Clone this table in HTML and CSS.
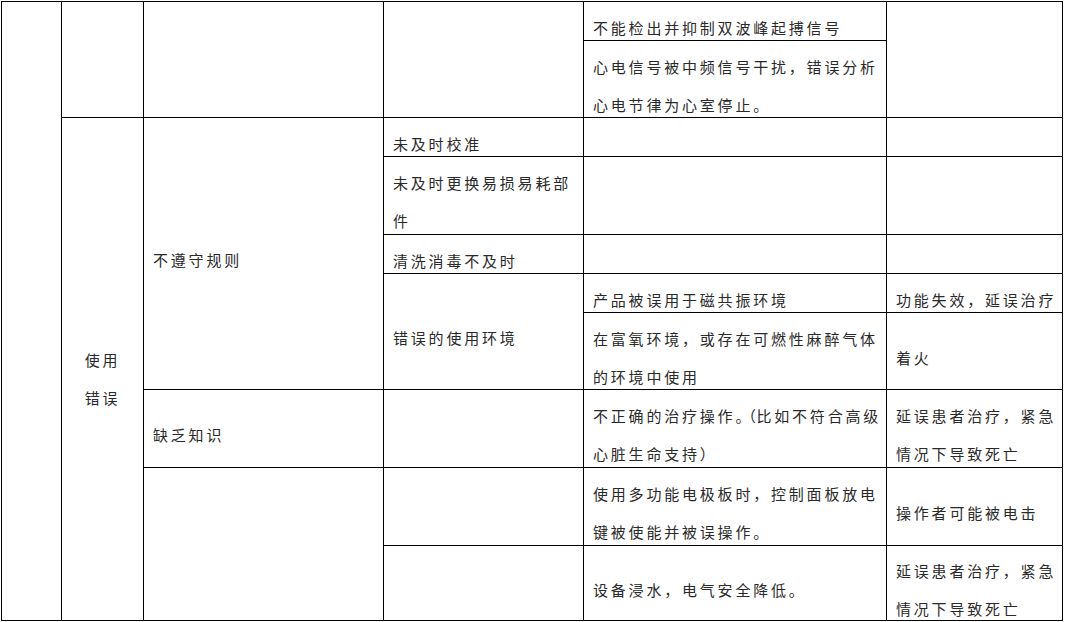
FILE: index.html
```html
<!DOCTYPE html>
<html lang="zh-CN">
<head>
<meta charset="utf-8">
<title>使用错误</title>
<link rel="stylesheet" href="styles.css">
</head>
<body>
<div class="sheet">
  <div class="cell a-c1"></div>

  <div class="cell a-c2-top"></div>
  <div class="cell a-c3-top"></div>
  <div class="cell a-c4-top"></div>
  <div class="cell a-r1c5"><p>不能检出并抑制双波峰起搏信号</p></div>
  <div class="cell a-c6-top"></div>
  <div class="cell a-r2c5"><p>心电信号被中频信号干扰，错误分析<br>心电节律为心室停止。</p></div>

  <div class="cell a-c2-main center"><p>使用<br>错误</p></div>
  <div class="cell a-c3-rules"><p>不遵守规则</p></div>
  <div class="cell a-r3c4"><p>未及时校准</p></div>
  <div class="cell a-r3c5"></div>
  <div class="cell a-r3c6"></div>

  <div class="cell a-r4c4"><p>未及时更换易损易耗部<br>件</p></div>
  <div class="cell a-r4c5"></div>
  <div class="cell a-r4c6"></div>

  <div class="cell a-r5c4"><p>清洗消毒不及时</p></div>
  <div class="cell a-r5c5"></div>
  <div class="cell a-r5c6"></div>

  <div class="cell a-env"><p>错误的使用环境</p></div>
  <div class="cell a-r6c5"><p>产品被误用于磁共振环境</p></div>
  <div class="cell a-r6c6"><p>功能失效，延误治疗</p></div>
  <div class="cell a-r7c5"><p>在富氧环境，或存在可燃性麻醉气体<br>的环境中使用</p></div>
  <div class="cell a-r7c6"><p>着火</p></div>

  <div class="cell a-r8c3"><p>缺乏知识</p></div>
  <div class="cell a-r8c4"></div>
  <div class="cell a-r8c5"><p>不正确的治疗操作<span class="stop">。</span><span class="paren">（</span>比如不符合高级<br>心脏生命支持）</p></div>
  <div class="cell a-r8c6"><p>延误患者治疗，紧急<br>情况下导致死亡</p></div>

  <div class="cell a-c3-bottom"></div>
  <div class="cell a-r9c4"></div>
  <div class="cell a-r9c5"><p>使用多功能电极板时，控制面板放电<br>键被使能并被误操作。</p></div>
  <div class="cell a-r9c6"><p>操作者可能被电击</p></div>

  <div class="cell a-r10c4"></div>
  <div class="cell a-r10c5"><p>设备浸水，电气安全降低。</p></div>
  <div class="cell a-r10c6"><p>延误患者治疗，紧急<br>情况下导致死亡</p></div>
</div>
</body>
</html>
```

FILE: styles.css
```css
html, body {
  margin: 0;
  background: #fff;
}

body {
  padding: 1px 0 0 1px;
}

.sheet {
  display: grid;
  grid-template-columns: 59px 81px 239px 199px 302px 175px;
  grid-template-rows: 38px 76px 38px 77px 38px 38px 76px 77px 77px 74px;
  gap: 1px;
  padding: 1px;
  background: #000;
  width: max-content;
  font-family: "Noto Sans CJK SC", "Noto Sans CJK JP", sans-serif;
  font-size: 15px;
  letter-spacing: 2.8px;
  line-height: 38px;
  color: #2a2a2a;
  text-spacing-trim: space-all;
}

.cell {
  background: #fff;
  display: flex;
  flex-direction: column;
  justify-content: center;
  box-sizing: border-box;
  padding: 13px 2px 0 9px;
  white-space: nowrap;
  min-width: 0;
  min-height: 0;
}

.cell p {
  margin: 0;
}

.center {
  text-align: center;
  padding: 19px 0 0 0;
}

.stop {
  letter-spacing: -9.5px;
}

.paren {
  letter-spacing: 0.5px;
}

/* column 1 */
.a-c1 { grid-column: 1; grid-row: 1 / 11; }

/* top block */
.a-c2-top { grid-column: 2; grid-row: 1 / 3; }
.a-c3-top { grid-column: 3; grid-row: 1 / 3; }
.a-c4-top { grid-column: 4; grid-row: 1 / 3; }
.a-r1c5 { grid-column: 5; grid-row: 1; }
.a-r2c5 { grid-column: 5; grid-row: 2; }
.a-c6-top { grid-column: 6; grid-row: 1 / 3; }

/* 使用错误 block */
.a-c2-main { grid-column: 2; grid-row: 3 / 11; }
.a-c3-rules { grid-column: 3; grid-row: 3 / 8; }
.a-r3c4 { grid-column: 4; grid-row: 3; }
.a-r3c5 { grid-column: 5; grid-row: 3; }
.a-r3c6 { grid-column: 6; grid-row: 3; }
.a-r4c4 { grid-column: 4; grid-row: 4; }
.a-r4c5 { grid-column: 5; grid-row: 4; }
.a-r4c6 { grid-column: 6; grid-row: 4; }
.a-r5c4 { grid-column: 4; grid-row: 5; }
.a-r5c5 { grid-column: 5; grid-row: 5; }
.a-r5c6 { grid-column: 6; grid-row: 5; }
.a-env { grid-column: 4; grid-row: 6 / 8; }
.a-r6c5 { grid-column: 5; grid-row: 6; }
.a-r6c6 { grid-column: 6; grid-row: 6; }
.a-r7c5 { grid-column: 5; grid-row: 7; }
.a-r7c6 { grid-column: 6; grid-row: 7; }
.a-r8c3 { grid-column: 3; grid-row: 8; }
.a-r8c4 { grid-column: 4; grid-row: 8; }
.a-r8c5 { grid-column: 5; grid-row: 8; }
.a-r8c6 { grid-column: 6; grid-row: 8; }
.a-c3-bottom { grid-column: 3; grid-row: 9 / 11; }
.a-r9c4 { grid-column: 4; grid-row: 9; }
.a-r9c5 { grid-column: 5; grid-row: 9; }
.a-r9c6 { grid-column: 6; grid-row: 9; }
.a-r10c4 { grid-column: 4; grid-row: 10; }
.a-r10c5 { grid-column: 5; grid-row: 10; }
.a-r10c6 { grid-column: 6; grid-row: 10; }
```
